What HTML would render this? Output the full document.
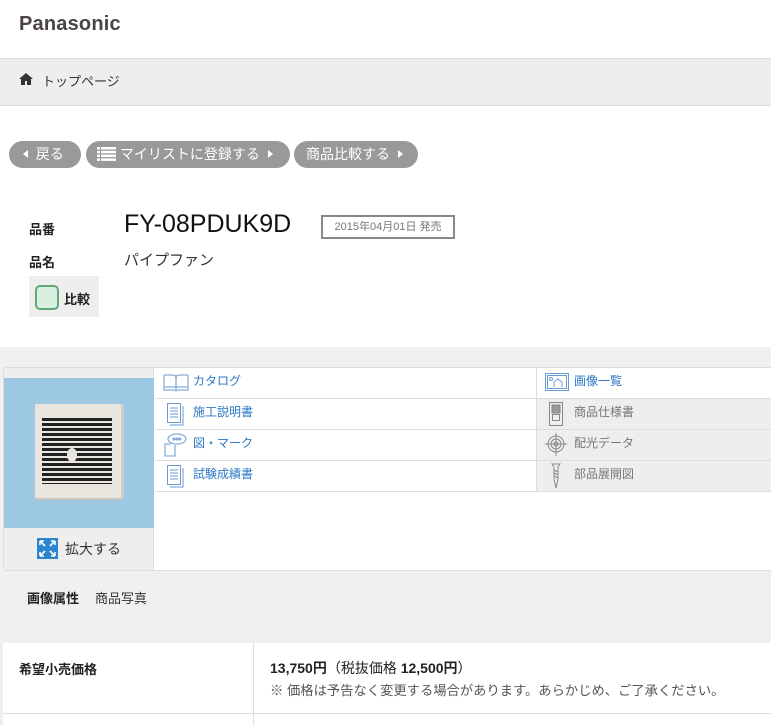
<!DOCTYPE html>
<html><head><meta charset="utf-8"><style>
*{margin:0;padding:0;box-sizing:border-box}
body{width:771px;height:725px;overflow:hidden;background:#fff;font-family:"Liberation Sans","Noto Sans CJK JP",sans-serif;color:#222;position:relative}
.a{position:absolute}
.btn{position:absolute;top:141px;height:27px;border-radius:14px;background:#999;color:#fff;font-size:14px;line-height:27px;white-space:nowrap}
.tri-l{display:inline-block;width:0;height:0;border-top:4px solid transparent;border-bottom:4px solid transparent;border-right:5px solid #fff;vertical-align:1px}
.tri-r{display:inline-block;width:0;height:0;border-top:4px solid transparent;border-bottom:4px solid transparent;border-left:5px solid #fff;vertical-align:1px}
.lk{position:absolute;font-size:12px;color:#2a78c6;line-height:31px;padding-left:38px}
.lk.g{color:#777}
</style></head><body>
<div class="a" style="left:19px;top:13px;font-size:20px;font-weight:bold;color:#4a4542;letter-spacing:0.2px">Panasonic</div>
<div class="a" style="left:0;top:58px;width:771px;height:48px;background:#eee;border-top:1px solid #ddd;border-bottom:1px solid #ddd"></div>
<svg class="a" style="left:19px;top:73px" width="14" height="12" viewBox="0 0 14 12"><path d="M7 0L0 6h2v6h4V8h2v4h4V6h2z" fill="#333"/></svg>
<div class="a" style="left:42px;top:71px;font-size:13px;color:#333">トップページ</div>

<div class="btn" style="left:9px;width:72px;padding-left:14px"><span class="tri-l"></span>&nbsp; 戻る</div>
<div class="btn" style="left:86px;width:204px;padding-left:11px"><svg width="19" height="14" style="vertical-align:-2px" viewBox="0 0 19 14"><g fill="#fff"><rect x="0" y="0" width="3" height="2.5"/><rect x="4" y="0" width="15" height="2.5"/><rect x="0" y="3.8" width="3" height="2.5"/><rect x="4" y="3.8" width="15" height="2.5"/><rect x="0" y="7.6" width="3" height="2.5"/><rect x="4" y="7.6" width="15" height="2.5"/><rect x="0" y="11.4" width="3" height="2.5"/><rect x="4" y="11.4" width="15" height="2.5"/></g></svg> マイリストに登録する &nbsp;<span class="tri-r"></span></div>
<div class="btn" style="left:294px;width:124px;padding-left:12px">商品比較する &nbsp;<span class="tri-r"></span></div>

<div class="a" style="left:29px;top:219px;font-size:13px;font-weight:bold">品番</div>
<div class="a" style="left:124px;top:210px;font-size:25px;color:#111">FY-08PDUK9D</div>
<div class="a" style="left:321px;top:215px;width:134px;height:24px;border:2px solid #888;font-size:11px;color:#777;text-align:center;line-height:20px">2015年04月01日 発売</div>
<div class="a" style="left:29px;top:252px;font-size:13px;font-weight:bold">品名</div>
<div class="a" style="left:124px;top:249px;font-size:15px;color:#333">パイプファン</div>
<div class="a" style="left:29px;top:276px;width:70px;height:41px;background:#eee"></div>
<div class="a" style="left:35px;top:285px;width:24px;height:25px;border:2px solid #5fa878;border-radius:5px;background:#d9efe0"></div>
<div class="a" style="left:64px;top:289px;font-size:13px;font-weight:bold">比較</div>

<div class="a" style="left:0;top:347px;width:771px;height:296px;background:#f0f0f0"></div>
<div class="a" style="left:3px;top:367px;width:770px;height:204px;background:#fff;border:1px solid #ddd;border-radius:3px"></div>
<div class="a" style="left:4px;top:368px;width:150px;height:202px;background:#eee;border-right:1px solid #ddd"></div>
<div class="a" style="left:4px;top:378px;width:150px;height:150px;background:#9cc8e4"></div>
<div class="a" style="left:35px;top:404px;width:89px;height:96px;background:#e8e6df;border-right:3px solid #cfcdc5;border-bottom:2px solid #c8c6be"></div>
<div class="a" style="left:42px;top:418px;width:70px;height:66px;background:repeating-linear-gradient(#222 0 3px,#e8e6df 3px 5px)"></div>
<div class="a" style="left:67px;top:448px;width:10px;height:14px;background:#e8e6df;border-radius:50%"></div>
<svg class="a" style="left:37px;top:538px" width="21" height="21" viewBox="0 0 21 21"><rect width="21" height="21" fill="#2c85cf"/><path d="M3 3l5 5M3 3v4M3 3h4M18 3l-5 5M18 3v4M18 3h-4M3 18l5-5M3 18v-4M3 18h4M18 18l-5-5M18 18v-4M18 18h-4" stroke="#fff" stroke-width="1.6"/></svg>
<div class="a" style="left:65px;top:539px;font-size:14px;color:#333">拡大する</div>

<div class="a" style="left:537px;top:398px;width:235px;height:93px;background:#eee"></div>
<div class="a" style="left:155px;top:398px;width:617px;border-top:1px solid #ddd"></div>
<div class="a" style="left:155px;top:429px;width:617px;border-top:1px solid #ddd"></div>
<div class="a" style="left:155px;top:460px;width:617px;border-top:1px solid #ddd"></div>
<div class="a" style="left:155px;top:491px;width:617px;border-top:1px solid #ddd"></div>
<div class="a" style="left:536px;top:368px;height:124px;border-left:1px solid #ddd"></div>

<div class="lk" style="left:155px;top:366px">カタログ</div>
<div class="lk" style="left:155px;top:397px">施工説明書</div>
<div class="lk" style="left:155px;top:428px">図・マーク</div>
<div class="lk" style="left:155px;top:459px">試験成績書</div>
<div class="lk" style="left:536px;top:366px">画像一覧</div>
<div class="lk g" style="left:536px;top:397px">商品仕様書</div>
<div class="lk g" style="left:536px;top:428px">配光データ</div>
<div class="lk g" style="left:536px;top:459px">部品展開図</div>
<svg class="a" style="left:163px;top:373px" width="26" height="20" viewBox="0 0 26 20" fill="none" stroke="#6a9ad0"><path d="M1 2h9c2 0 3 1 3 3v14M25 2h-9c-2 0-3 1-3 3M1 2v15h11M25 2v15H14M1 14h24"/></svg>
<svg class="a" style="left:166px;top:402px" width="18" height="24" viewBox="0 0 18 24" fill="none" stroke="#6a9ad0"><rect x="1.5" y="1.5" width="13" height="19"/><path d="M4 6h8M4 9h8M4 12h8M4 15h8M17 4v19H4"/></svg>
<svg class="a" style="left:163px;top:433px" width="24" height="24" viewBox="0 0 24 24" fill="none" stroke="#6a9ad0"><ellipse cx="14" cy="6" rx="9" ry="5"/><path d="M12 12v11H2V11h6"/><circle cx="11" cy="6" r="1"/><circle cx="14" cy="6" r="1"/><circle cx="17" cy="6" r="1"/></svg>
<svg class="a" style="left:166px;top:464px" width="18" height="24" viewBox="0 0 18 24" fill="none" stroke="#6a9ad0"><rect x="1.5" y="1.5" width="13" height="19"/><path d="M4 6h8M4 9h8M4 12h8M4 15h8M17 4v19H4"/></svg>
<svg class="a" style="left:545px;top:373px" width="24" height="18" viewBox="0 0 24 18" fill="none" stroke="#6a9ad0"><rect x="0.5" y="0.5" width="23" height="17"/><rect x="2.5" y="2.5" width="19" height="13"/><circle cx="6" cy="6" r="1.5"/><path d="M9 14V9l4-3 4 3v5"/></svg>
<svg class="a" style="left:549px;top:402px" width="14" height="24" viewBox="0 0 14 24" fill="none" stroke="#888"><rect x="0.5" y="0.5" width="13" height="23"/><rect x="3" y="3" width="8" height="8" fill="#999"/><rect x="3.5" y="12.5" width="7" height="6"/></svg>
<svg class="a" style="left:545px;top:432px" width="22" height="24" viewBox="0 0 22 24" fill="none" stroke="#888"><circle cx="11" cy="12" r="8"/><circle cx="11" cy="12" r="5"/><circle cx="11" cy="12" r="2"/><path d="M0 12h22M11 1v23"/></svg>
<svg class="a" style="left:551px;top:463px" width="10" height="26" viewBox="0 0 10 26" fill="none" stroke="#888"><path d="M1 1h8L7 4v12l-2 9-2-9V4z"/><path d="M3 7l4 2M3 10l4 2M3 13l4 2"/></svg>

<div class="a" style="left:27px;top:588px;font-size:13px;font-weight:bold;color:#222">画像属性</div>
<div class="a" style="left:95px;top:588px;font-size:13px;color:#333">商品写真</div>

<div class="a" style="left:0;top:643px;width:771px;height:82px;border-left:3px solid #eee"></div>
<div class="a" style="left:3px;top:713px;width:768px;border-top:1px solid #ddd"></div>
<div class="a" style="left:253px;top:643px;height:82px;border-left:1px solid #ddd"></div>
<div class="a" style="left:19px;top:659px;font-size:13px;font-weight:bold">希望小売価格</div>
<div class="a" style="left:270px;top:658px;font-size:14px;font-weight:bold;color:#222">13,750円<span style="font-weight:normal">（税抜価格 </span>12,500円<span style="font-weight:normal">）</span></div>
<div class="a" style="left:270px;top:680px;font-size:13.3px;color:#555;white-space:nowrap">※ 価格は予告なく変更する場合があります。あらかじめ、ご了承ください。</div>
</body></html>
